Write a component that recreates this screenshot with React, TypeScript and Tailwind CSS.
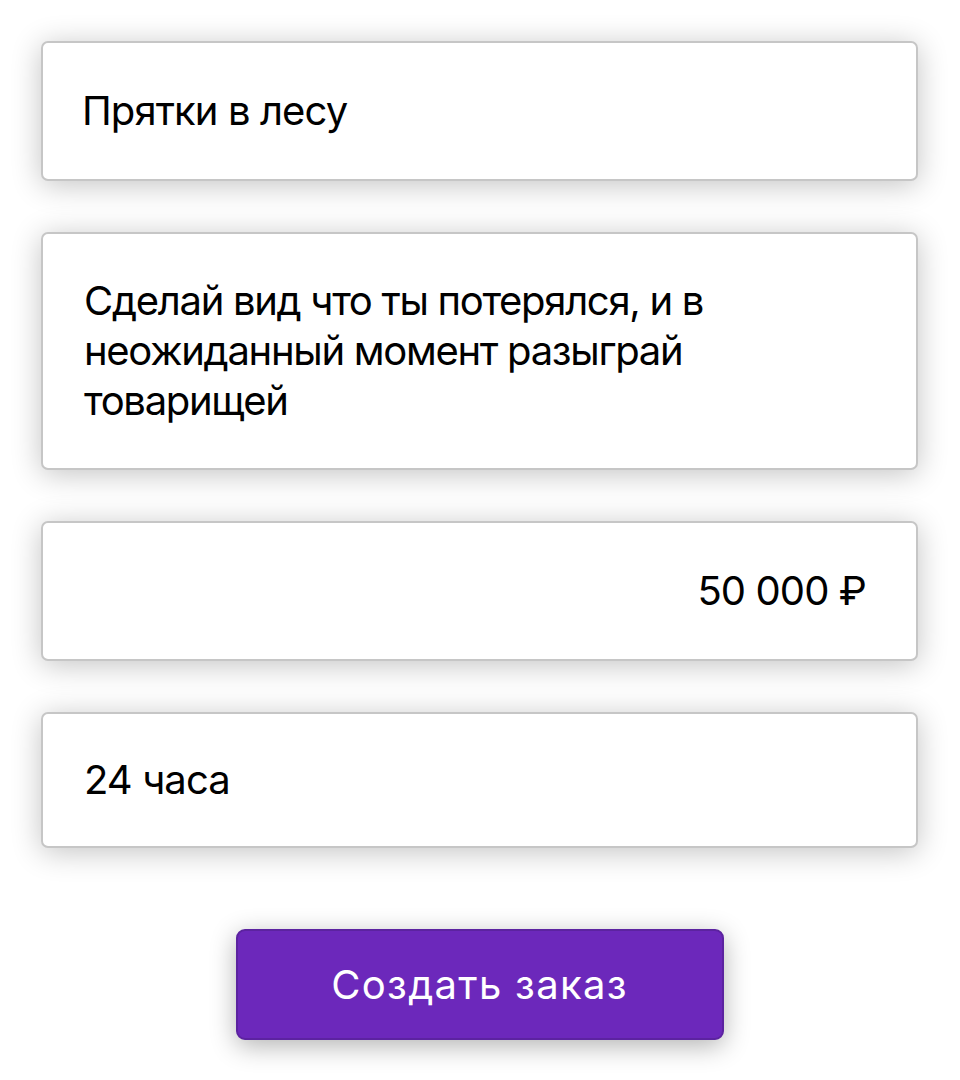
import React from 'react';

// Поля формы заказа
const fieldBase =
    "w-[877px] bg-white border-2 border-[#c6c6c6] rounded-[7px] shadow-[0_4px_30px_rgba(0,0,0,0.24)] text-[40px] leading-[50px] text-black tracking-[-0.9px]";

const App: React.FC = () => {
    return (
        <main
            className="min-h-[1080px] bg-white flex flex-col items-start pt-[41px] pl-[41px]"
            style={{ fontFamily: 'Inter, "Noto Sans", sans-serif' }}
        >
            <div className="flex flex-col gap-[51px]">
                <div className={`${fieldBase} h-[140px] flex items-center pl-[39px]`}>
                    Прятки в лесу
                </div>

                <div className={`${fieldBase} h-[238px] flex items-center pl-[41px]`}>
                    <p className="tracking-[-1.3px]">
                        Сделай вид что ты потерялся, и в<br />
                        неожиданный момент разыграй<br />
                        товарищей
                    </p>
                </div>

                <div className={`${fieldBase} h-[140px] flex items-center justify-end pr-[50px]`}>
                    50 000 ₽
                </div>

                <div className={`${fieldBase} h-[136px] flex items-center pl-[41px]`}>
                    24 часа
                </div>
            </div>

            <div className="w-[877px] flex justify-center mt-[81px]">
                <button className="w-[488px] h-[111px] bg-[#6c28bb] border-2 border-[#5c23a0] rounded-[9px] shadow-[0_6px_26px_rgba(0,0,0,0.3)] text-white text-[40px] tracking-[1.3px]">
                    Создать заказ
                </button>
            </div>
        </main>
    );
};

export default App;
